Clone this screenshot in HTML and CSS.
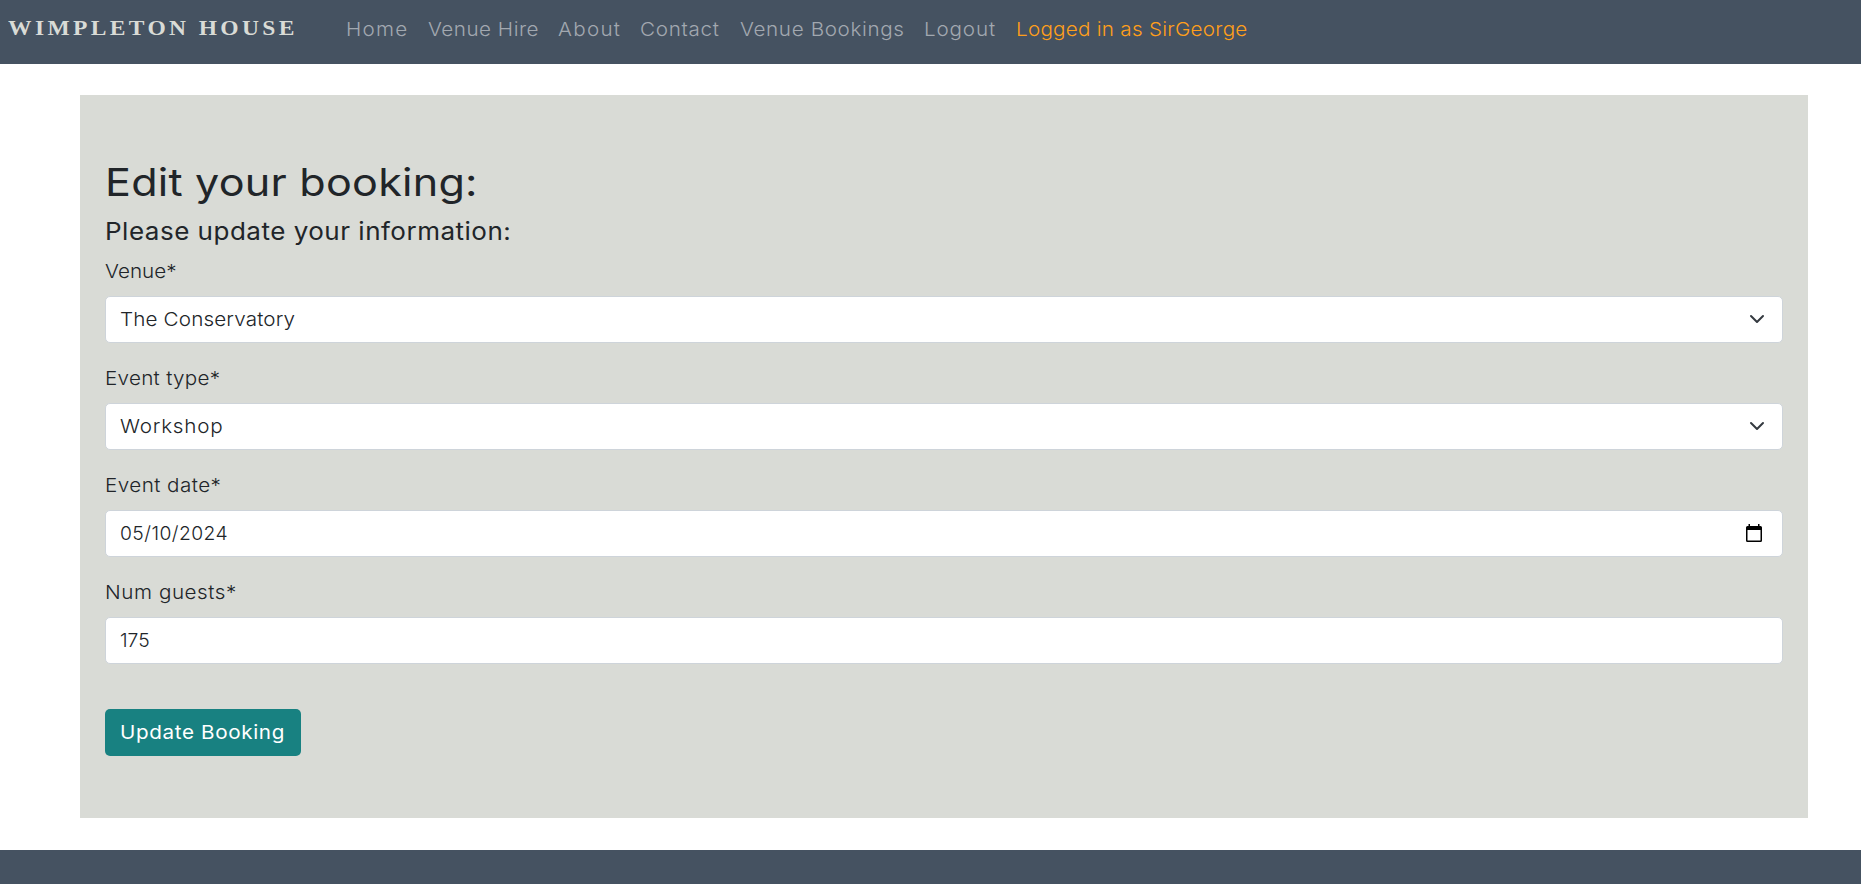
FILE: index.html
```
<!DOCTYPE html>
<html lang="en">
<head>
<meta charset="utf-8">
<title>Wimpleton House - Edit booking</title>
<link rel="stylesheet" href="styles.css">
</head>
<body>
<header class="navbar">
  <a class="brand">WIMPLETON HOUSE</a>
  <nav class="nav-links">
    <a class="wide ls-home">Home</a>
    <a class="wide ls-hire">Venue Hire</a>
    <a class="wide ls-about">About</a>
    <a class="wide ls-contact">Contact</a>
    <a class="wide ls-bookings">Venue Bookings</a>
    <a class="wide ls-logout">Logout</a>
    <a class="wide user">Logged in as SirGeorge</a>
  </nav>
</header>
<main class="panel">
  <h1>Edit your booking:</h1>
  <h2>Please update your information:</h2>
  <form>
    <label class="wide ls-venue">Venue*</label>
    <div class="control"><span class="wide ls-conservatory">The Conservatory</span>
      <svg class="chevron" viewBox="0 0 16 16"><path d="m2 5 6 6 6-6" fill="none" stroke="#343a40" stroke-linecap="round" stroke-linejoin="round" stroke-width="2"/></svg>
    </div>
    <label class="wide ls-type">Event type*</label>
    <div class="control"><span class="wide ls-workshop">Workshop</span>
      <svg class="chevron" viewBox="0 0 16 16"><path d="m2 5 6 6 6-6" fill="none" stroke="#343a40" stroke-linecap="round" stroke-linejoin="round" stroke-width="2"/></svg>
    </div>
    <label class="wide ls-date">Event date*</label>
    <div class="control"><span class="ls-day">05/10/2024</span>
      <svg class="calendar" viewBox="0 0 16 18"><path d="M2.500 0h1.500v2h8V0h1.500v2h1Q16 2 16 3.500V16.500Q16 18 14.500 18h-13Q0 18 0 16.500V3.500Q0 2 1.500 2h1ZM1.500 6v10.500h13V6Z" fill="#000" fill-rule="evenodd"/></svg>
    </div>
    <label class="wide ls-guests">Num guests*</label>
    <div class="control"><span class="ls-count">175</span></div>
    <button type="button"><span class="wide">Update Booking</span></button>
  </form>
</main>
<footer class="footer"></footer>
</body>
</html>
```
FILE: styles.css
```
* { box-sizing: border-box; }
body { margin: 0; height: 884px; overflow: hidden; display: flex; flex-direction: column; background: #fff; color: #212529; font: 300 19.3px/30px Inter, "Open Sans", sans-serif; }
.wide { display: block; width: max-content; transform: scaleX(1.07); transform-origin: left; }
.navbar { height: 64px; flex: none; display: flex; align-items: flex-start; background: #455261; }
.brand { width: 338px; margin: 13px 0 0 8px; color: #d9dbd6; font: 700 21px/30px "Liberation Serif", serif; letter-spacing: 3px; white-space: nowrap; transform: scaleX(1.12); transform-origin: left; }
.nav-links { display: grid; grid-template-columns: 82px 130px 82px 100px 184px 92px auto; padding-top: 14px; color: #a2a8b0; font-weight: 350; white-space: nowrap; }
.nav-links .user { color: #ff9f1a; letter-spacing: .25px; }
.ls-home { letter-spacing: 1.2px; }
.ls-hire { letter-spacing: .47px; }
.ls-about { letter-spacing: 1.2px; }
.ls-contact { letter-spacing: .65px; }
.ls-bookings { letter-spacing: .6px; }
.ls-logout { letter-spacing: .8px; }
.panel { height: 723px; flex: none; margin: 31px 53px 32px 80px; padding: 63px 25px 0; background: #d9dbd6; }
h1, h2 { margin: 0; width: max-content; font-weight: 430; white-space: nowrap; transform-origin: left; }
h1 { font-size: 38.5px; line-height: 48px; letter-spacing: .2px; margin-bottom: 10px; transform: scaleX(1.12); }
h2 { font-size: 24.3px; line-height: 30px; letter-spacing: .47px; margin-bottom: 10px; transform: scaleX(1.07); }
label { height: 30px; margin-bottom: 10px; line-height: 30px; }
.ls-venue { letter-spacing: .04px; }
.ls-type { letter-spacing: .27px; }
.ls-date { letter-spacing: .42px; }
.ls-guests { letter-spacing: .53px; }
.control { height: 47px; margin-bottom: 20px; padding: 0 15px 2px 14px; display: flex; align-items: center; justify-content: space-between; background: #fff; border: 1px solid #ced4da; border-radius: 5px; }
.ls-conservatory { letter-spacing: .14px; }
.ls-workshop { letter-spacing: .75px; }
.ls-day { letter-spacing: .45px; }
.ls-count { letter-spacing: 0; }
.chevron { width: 16px; height: 16px; margin-right: 2px; }
.calendar { width: 16px; height: 18px; margin-right: 5px; }
button { display: block; width: 196px; height: 47px; margin-top: 45px; padding: 0 0 2px 15px; border: 0; border-radius: 5px; background: #188181; color: #fff; font: 400 19.3px/30px Inter, sans-serif; letter-spacing: .6px; text-align: left; white-space: nowrap; }
.footer { flex: 1; background: #455261; }
```
